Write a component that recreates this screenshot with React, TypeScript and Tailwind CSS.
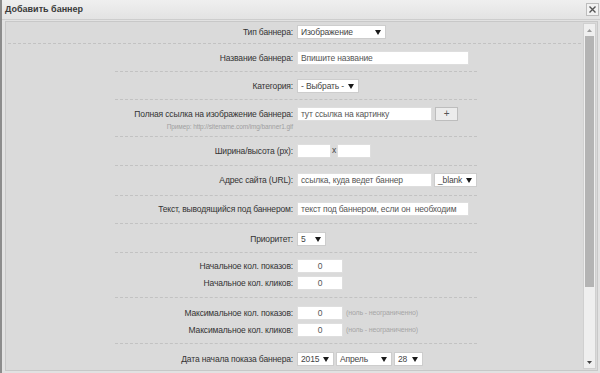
import React from "react";

const Tri = () => (
  <svg width="6" height="5" viewBox="0 0 6 5" className="shrink-0">
    <path d="M0 0 H6 L3 5 Z" fill="#1a1a1a" />
  </svg>
);

const Sel = ({ w, text }: { w: string; text: string }) => (
  <div className={`${w} h-[14px] bg-white border border-[#cdcdcd] flex items-center justify-between pl-[3px] pr-[4px] text-[#444]`}>
    <span className="leading-[12px] whitespace-nowrap">{text}</span>
    <Tri />
  </div>
);

const Inp = ({ w, text, center }: { w: string; text?: string; center?: boolean }) => (
  <div className={`${w} h-[14px] bg-white border border-[#dedede] flex items-center px-[3px] text-[#555] ${center ? "justify-center" : ""}`}>
    <span className="leading-[12px] whitespace-pre">{text ?? ""}</span>
  </div>
);

const Label = ({ children }: { children: React.ReactNode }) => (
  <div className="w-[291px] shrink-0 pr-[4px] text-right leading-[14px] text-[#333]">{children}</div>
);

const Sep = () => <div className="ml-[109px] w-[362px] border-t border-dashed border-[#c2c2c2]" />;

export default function App() {
  return (
    <div
      className="w-[600px] h-[373px] bg-[#e2e2e2] flex flex-col overflow-hidden border-l-2 border-[#8c8c8c] text-[8.5px] tracking-[-0.15px]"
      style={{ fontFamily: "'Liberation Sans', Arial, sans-serif" }}
    >
      {/* title bar */}
      <div className="h-[20px] shrink-0 flex items-center justify-between pl-[3px] pr-[1px] bg-gradient-to-b from-[#efefef] to-[#e3e3e3] border-b border-[#cdcdcd]">
        <span className="font-bold text-[#3a3a3a] text-[9px] tracking-normal">Добавить баннер</span>
        <div className="w-[13px] h-[13px] border border-[#bdbdbd] bg-[#f2f2f2] flex items-center justify-center">
          <svg width="7" height="7" viewBox="0 0 7 7">
            <path d="M0.5 0.5 L6.5 6.5 M6.5 0.5 L0.5 6.5" stroke="#555" strokeWidth="1.4" />
          </svg>
        </div>
      </div>

      {/* body */}
      <div className="flex-1 flex pl-[3px] pr-[2px] pt-[1px] pb-[2px] min-h-0">
        <div className="flex-1 flex border border-[#c8c8c8] bg-[#dadada] min-h-0">
          <div className="flex-1 overflow-hidden">
            {/* row 1 */}
            <div className="flex pt-[3px] pb-[4px]">
              <Label>Тип баннера:</Label>
              <Sel w="w-[89px]" text="Изображение" />
            </div>
            <div className="mx-[2px] border-t border-dashed border-[#c2c2c2]" />
            {/* row 2 */}
            <div className="flex pt-[7px] pb-[6px]">
              <Label>Название баннера:</Label>
              <Inp w="w-[172px]" text="Впишите название" />
            </div>
            <Sep />
            <div className="flex pt-[7px] pb-[6px]">
              <Label>Категория:</Label>
              <Sel w="w-[62px]" text="- Выбрать -" />
            </div>
            <Sep />
            <div className="flex pt-[7px] pb-[4px]">
              <Label>
                <div>Полная ссылка на изображение баннера:</div>
                <div className="text-[6.5px] leading-[11px] tracking-[-0.1px] text-[#a0a0a0]">Пример: http://sitename.com/img/banner1.gif</div>
              </Label>
              <div className="flex items-start gap-[3px]">
                <Inp w="w-[135px]" text="тут ссылка на картинку" />
                <div className="w-[23px] h-[14px] bg-[#ececec] border border-[#bdbdbd] flex items-center justify-center text-[#555] text-[10px] leading-none">+</div>
              </div>
            </div>
            <Sep />
            <div className="flex pt-[7px] pb-[7px]">
              <Label>Ширина/высота (px):</Label>
              <div className="flex items-center">
                <Inp w="w-[34px]" />
                <span className="w-[6px] text-center text-[#444] leading-[12px] -mt-[3px]">x</span>
                <Inp w="w-[34px]" />
              </div>
            </div>
            <Sep />
            <div className="flex pt-[7px] pb-[8px]">
              <Label>Адрес сайта (URL):</Label>
              <div className="flex items-center gap-[2px]">
                <Inp w="w-[135px]" text="ссылка, куда ведет баннер" />
                <Sel w="w-[43px]" text="_blank" />
              </div>
            </div>
            <Sep />
            <div className="flex pt-[6px] pb-[7px]">
              <Label>Текст, выводящийся под баннером:</Label>
              <Inp w="w-[172px]" text="текст под баннером, если он  необходим" />
            </div>
            <Sep />
            <div className="flex pt-[8px] pb-[6px]">
              <Label>Приоритет:</Label>
              <Sel w="w-[29px]" text="5" />
            </div>
            <Sep />
            <div className="flex flex-col gap-[3px] pt-[6px] pb-[7px]">
              <div className="flex">
                <Label>Начальное кол. показов:</Label>
                <Inp w="w-[46px]" text="0" center />
              </div>
              <div className="flex">
                <Label>Начальное кол. кликов:</Label>
                <Inp w="w-[46px]" text="0" center />
              </div>
            </div>
            <Sep />
            <div className="flex flex-col gap-[3px] pt-[8px] pb-[6px]">
              <div className="flex items-center">
                <Label>Максимальное кол. показов:</Label>
                <Inp w="w-[46px]" text="0" center />
                <span className="ml-[3px] text-[7px] text-[#a6a6a6]">(ноль - неограниченно)</span>
              </div>
              <div className="flex items-center">
                <Label>Максимальное кол. кликов:</Label>
                <Inp w="w-[46px]" text="0" center />
                <span className="ml-[3px] text-[7px] text-[#a6a6a6]">(ноль - неограниченно)</span>
              </div>
            </div>
            <Sep />
            <div className="flex flex-col gap-[3px] pt-[8px]">
              <div className="flex items-center">
                <Label>Дата начала показа баннера:</Label>
                <div className="flex gap-[2px]">
                  <Sel w="w-[37px]" text="2015" />
                  <Sel w="w-[56px]" text="Апрель" />
                  <Sel w="w-[29px]" text="28" />
                </div>
              </div>
              <div className="flex items-center">
                <div className="w-[291px] shrink-0" />
                <div className="flex gap-[2px]">
                  <Inp w="w-[37px]" />
                  <Inp w="w-[56px]" />
                  <Inp w="w-[29px]" />
                </div>
              </div>
            </div>
          </div>

          {/* scrollbar */}
          <div className="w-[13px] shrink-0 mr-[1px] my-[1px] flex flex-col bg-[#efefef] border border-[#d0d0d0]">
            <div className="h-[12px] flex items-center justify-center">
              <svg width="5" height="3" viewBox="0 0 5 3">
                <path d="M0 3 H5 L2.5 0 Z" fill="#9a9a9a" />
              </svg>
            </div>
            <div className="mx-[1px] h-[251px] bg-[#b4b4b4]" />
            <div className="flex-1" />
            <div className="h-[12px] flex items-center justify-center">
              <svg width="5" height="3" viewBox="0 0 5 3">
                <path d="M0 0 H5 L2.5 3 Z" fill="#444" />
              </svg>
            </div>
          </div>
        </div>
      </div>
    </div>
  );
}
